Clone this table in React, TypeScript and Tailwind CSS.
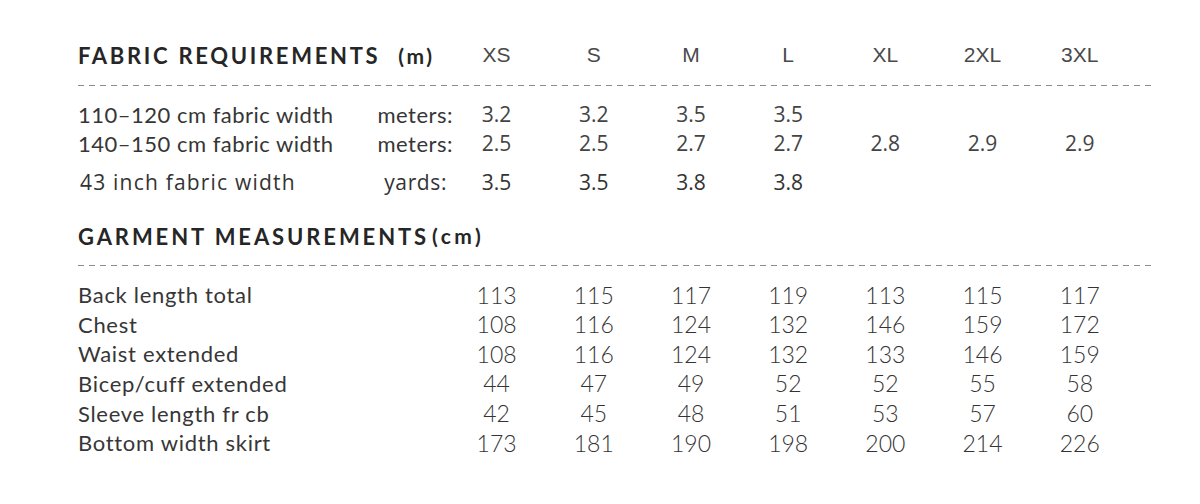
const SIZES = ["XS", "S", "M", "L", "XL", "2XL", "3XL"];

const fabric = [
  { label: "110–120 cm fabric width", unit: "meters:", values: ["3.2", "3.2", "3.5", "3.5", "", "", ""] },
  { label: "140–150 cm fabric width", unit: "meters:", values: ["2.5", "2.5", "2.7", "2.7", "2.8", "2.9", "2.9"] },
];

const garment = [
  { label: "Back length total", values: ["113", "115", "117", "119", "113", "115", "117"] },
  { label: "Chest", values: ["108", "116", "124", "132", "146", "159", "172"] },
  { label: "Waist extended", values: ["108", "116", "124", "132", "133", "146", "159"] },
  { label: "Bicep/cuff extended", values: ["44", "47", "49", "52", "52", "55", "58"] },
  { label: "Sleeve length fr cb", values: ["42", "45", "48", "51", "53", "57", "60"] },
  { label: "Bottom width skirt", values: ["173", "181", "190", "198", "200", "214", "226"] },
];

function Dashes() {
  return (
    <div className="h-px w-[1077px] bg-[repeating-linear-gradient(to_right,#8c8c8c_0_6px,transparent_6px_11px)]" />
  );
}

function Cells({ values, className }: { values: string[]; className: string }) {
  return (
    <>
      {values.map((v, i) => (
        <div key={i} className={`w-[97.2px] shrink-0 text-center ${className}`}>
          {v}
        </div>
      ))}
    </>
  );
}

export default function App() {
  return (
    <div className="h-[504px] w-[1200px] bg-white pl-[78px] pt-[40px] font-['Lato',sans-serif] text-[#363636]">
      {/* fabric requirements */}
      <div className="flex h-[30px] items-center">
        <div className="w-[370px] shrink-0 whitespace-nowrap text-[22px] font-bold tracking-[2.7px] text-[#262626]">
          FABRIC REQUIREMENTS
          <span className="ml-[18px] text-[21px] tracking-[2.5px]">(m)</span>
        </div>
        <Cells values={SIZES} className="font-['Liberation_Sans',sans-serif] text-[21px] text-[#4a4a4a]" />
      </div>
      <div className="mt-[15px]">
        <Dashes />
      </div>

      <div className="mt-[14px]">
        {fabric.map((r) => (
          <div key={r.label} className="flex h-[29px] items-center text-[22px] tracking-[0.5px]">
            <div className="flex w-[370px] shrink-0 items-center justify-between">
              <span>{r.label}</span>
              <span className="-mr-[5px]">{r.unit}</span>
            </div>
            <Cells values={r.values} className="font-['Open_Sans',sans-serif] text-[21px] tracking-normal text-[#444]" />
          </div>
        ))}
        <div className="mt-[10px] flex h-[30px] items-center font-['Open_Sans',sans-serif] text-[21px] text-[#333]">
          <div className="flex w-[370px] shrink-0 items-center justify-between pl-[2px] pr-[1px]">
            <span className="tracking-[1.2px]">43 inch fabric width</span>
            <span className="tracking-[0.6px]">yards:</span>
          </div>
          <Cells values={["3.5", "3.5", "3.8", "3.8", "", "", ""]} className="text-[21px]" />
        </div>
      </div>

      {/* garment measurements */}
      <div className="mt-[23px] flex h-[30px] items-center whitespace-nowrap text-[22px] font-bold tracking-[2.9px] text-[#262626]">
        GARMENT MEASUREMENTS
        <span className="ml-[3px] text-[21px] tracking-[3.5px]">(cm)</span>
      </div>
      <div className="mt-[14px]">
        <Dashes />
      </div>

      <div className="mt-[14px]">
        {garment.map((r) => (
          <div key={r.label} className="flex h-[29.6px] items-center">
            <div className="w-[370px] shrink-0 text-[22px] tracking-[0.7px]">{r.label}</div>
            <Cells values={r.values} className="text-[23px] font-light text-[#333]" />
          </div>
        ))}
      </div>
    </div>
  );
}
